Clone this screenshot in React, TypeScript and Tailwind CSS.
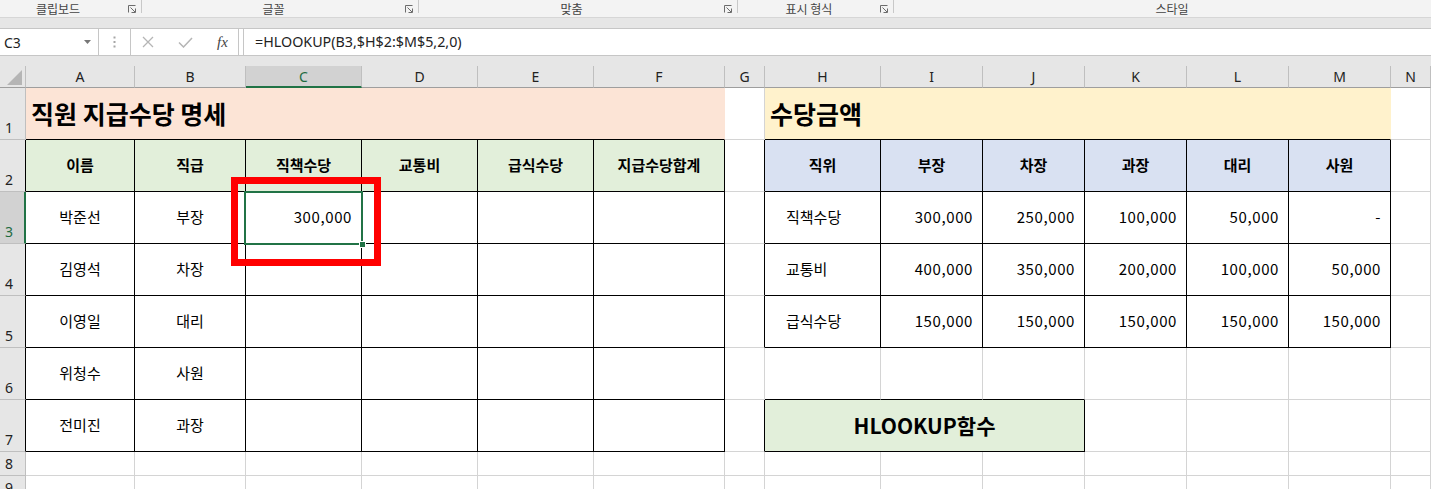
import React from 'react';

type Cell = {
  t?: string;
  a?: 'l' | 'c' | 'r' | 'h';
  bold?: boolean;
  bg?: string;
  r?: boolean;
  b?: boolean;
  span?: 3 | 6;
  kind?: 'title' | 'box';
  rc?: string;
};

const COLS = ['A', 'B', 'C', 'D', 'E', 'F', 'G', 'H', 'I', 'J', 'K', 'L', 'M', 'N'];

const GREEN = 'bg-[#e2efda]';
const BLUE = 'bg-[#d9e1f2]';

const empty = (n: number): Cell[] => Array.from({ length: n }, () => ({}));

const leftHead = ['이름', '직급', '직책수당', '교통비', '급식수당', '지급수당합계'];
const rightHead = ['직위', '부장', '차장', '과장', '대리', '사원'];

const people = [
  ['박준선', '부장', '300,000'],
  ['김영석', '차장', ''],
  ['이영일', '대리', ''],
  ['위청수', '사원', ''],
  ['전미진', '과장', ''],
];

const amounts = [
  ['직책수당', '300,000', '250,000', '100,000', '50,000', '-'],
  ['교통비', '400,000', '350,000', '200,000', '100,000', '50,000'],
  ['급식수당', '150,000', '150,000', '150,000', '150,000', '150,000'],
];

function leftRow(i: number): Cell[] {
  const [name, rank, pay] = people[i];
  return [
    { t: name, a: 'c', r: true, b: true },
    { t: rank, a: 'c', r: true, b: true },
    { t: pay, a: 'r', r: true, b: true },
    { r: true, b: true },
    { r: true, b: true },
    { r: true, b: true },
  ];
}

function rightRow(i: number): Cell[] {
  const row = amounts[i];
  return row.map((t, j) => ({ t, a: j === 0 ? 'h' : 'r', r: true, b: true }) as Cell);
}

const rows: Cell[][] = [
  [
    { t: '직원 지급수당 명세', kind: 'title', span: 6, bg: 'bg-[#fce4d6]', b: true, rc: 'border-r-[#fce4d6]' },
    {},
    { t: '수당금액', kind: 'title', span: 6, bg: 'bg-[#fff2cc]', b: true, rc: 'border-r-[#fff2cc]' },
    {},
  ],
  [
    ...leftHead.map((t) => ({ t, a: 'c', bold: true, bg: GREEN, r: true, b: true }) as Cell),
    { r: true },
    ...rightHead.map((t) => ({ t, a: 'c', bold: true, bg: BLUE, r: true, b: true }) as Cell),
    {},
  ],
  [...leftRow(0), { r: true }, ...rightRow(0), {}],
  [...leftRow(1), { r: true }, ...rightRow(1), {}],
  [...leftRow(2), { r: true }, ...rightRow(2), {}],
  [...leftRow(3), {}, { b: true }, { b: true }, { b: true }, {}, {}, {}, {}],
  [
    ...leftRow(4),
    { r: true },
    { t: 'HLOOKUP함수', kind: 'box', a: 'c', span: 3, bg: GREEN, r: true, b: true },
    {},
    {},
    {},
    {},
  ],
  empty(14),
  empty(14),
];

function Launcher() {
  return (
    <svg width="8" height="8" viewBox="0 0 8 8" className="shrink-0" fill="none" stroke="#6b6b6b" strokeWidth="1">
      <path d="M0.5 7.5V0.5H7.5" />
      <path d="M2.5 2.5L7 7" />
      <path d="M7.5 3.5V7.5H3.5" />
    </svg>
  );
}

function RibbonGroup({ label, w, pad = '' }: { label: string; w: string; pad?: string }) {
  return (
    <>
      <div className={`flex items-start pt-[2px] h-[17px] shrink-0 ${w}`}>
        <span className={`flex-1 text-center leading-[13px] ${pad}`}>{label}</span>
        <div className="mt-[3px] mr-[5px]">
          <Launcher />
        </div>
      </div>
      <div className="w-px h-[13px] bg-[#c8c8c8] shrink-0" />
    </>
  );
}

function GridCell({ c, selected }: { c: Cell; selected?: boolean }) {
  const span = c.span === 6 ? 'col-span-6' : c.span === 3 ? 'col-span-3' : '';
  const rb = c.rc ?? (c.r ? 'border-r-black' : 'border-r-[#d4d4d4]');
  const bb = c.b ? 'border-b-black' : 'border-b-[#d4d4d4]';
  const align =
    c.a === 'r'
      ? 'justify-end pr-[9px] tracking-[0.6px]'
      : c.a === 'c'
        ? 'justify-center'
        : c.a === 'h'
          ? 'justify-start pl-[21px]'
          : 'justify-start pl-[5px]';
  const size =
    c.kind === 'title'
      ? 'text-[25px] font-bold'
      : c.kind === 'box'
        ? 'text-[21px] font-bold'
        : c.bold
          ? 'text-[15px] font-bold'
          : 'text-[15px]';
  return (
    <div
      className={`flex items-center border-r border-b whitespace-nowrap text-black ${span} ${rb} ${bb} ${align} ${size} ${c.bg ?? 'bg-white'} ${selected ? 'relative' : ''}`}
    >
      {c.t}
      {selected ? (
        <>
          <div className="absolute left-[-2px] top-[-1px] w-[119px] h-[54px] border-2 border-[#217346] z-10" />
          <div className="absolute left-[113px] top-[49px] w-[5px] h-[5px] bg-[#217346] border border-white box-content z-10" />
          <div className="absolute left-[-15px] top-[-15px] w-[150px] h-[89px] border-[7px] border-[#ff0000] z-20" />
        </>
      ) : null}
    </div>
  );
}

export default function App() {
  return (
    <div className="w-[1431px] h-[489px] overflow-hidden bg-white font-['Noto_Sans_CJK_KR','Noto_Sans',sans-serif] select-none">
      {/* ribbon group labels */}
      <div className="h-[18px] bg-[#f3f3f3] border-b border-[#d6d6d6] flex text-[12px] text-[#444] overflow-hidden">
        <RibbonGroup label="클립보드" w="w-[141px]" pad="pr-[12px]" />
        <RibbonGroup label="글꼴" w="w-[276px]" />
        <RibbonGroup label="맞춤" w="w-[318px]" />
        <RibbonGroup label="표시 형식" w="w-[155px]" />
        <div className="w-[556px] shrink-0 text-center leading-[13px] pt-[2px]">스타일</div>
      </div>
      <div className="h-[11px] bg-[#e6e6e6] border-b border-[#c6c6c6]" />

      {/* formula bar */}
      <div className="h-[27px] bg-white border-b border-[#c6c6c6] flex items-stretch font-['Noto_Sans',sans-serif] text-[#222]">
        <div className="w-[99px] border-r border-[#c6c6c6] flex items-center justify-between pl-[4px] pr-[7px] text-[14px]">
          <span>C3</span>
          <svg width="7" height="4" viewBox="0 0 7 4">
            <path d="M0 0H7L3.5 4Z" fill="#777" />
          </svg>
        </div>
        <div className="w-[31px] flex items-center justify-center">
          <svg width="3" height="12" viewBox="0 0 3 12" fill="#a6a6a6">
            <rect x="0.5" y="0.5" width="2" height="2" />
            <rect x="0.5" y="5" width="2" height="2" />
            <rect x="0.5" y="9.5" width="2" height="2" />
          </svg>
        </div>
        <div className="w-[109px] border-l border-r border-[#c6c6c6] flex items-center pl-[11px] gap-[24px]">
          <svg width="12" height="12" viewBox="0 0 12 12" stroke="#b5b5b5" strokeWidth="1.3">
            <path d="M1 1L11 11M11 1L1 11" />
          </svg>
          <svg width="15" height="11" viewBox="0 0 15 11" fill="none" stroke="#b5b5b5" strokeWidth="1.5">
            <path d="M1 5.5L5.5 10L14 1" />
          </svg>
          <span className="italic font-['Liberation_Serif',serif] text-[15px] text-[#444] leading-none">fx</span>
        </div>
        <div className="w-[4px]" />
        <div className="flex-1 border-l border-[#c6c6c6] flex items-center pl-[11px] text-[14.3px] text-[#222]">
          =HLOOKUP(B3,$H$2:$M$5,2,0)
        </div>
      </div>
      <div className="h-[10px] bg-[#e6e6e6]" />

      {/* sheet grid */}
      <div className="grid grid-cols-[26px_109px_111px_116px_116px_116px_131px_40px_116px_102px_102px_102px_102px_102px_1fr] grid-rows-[22px_repeat(7,52px)_24px_24px]">
        <div className="bg-[#e6e6e6] border-r border-b border-r-[#bfbfbf] border-b-[#9e9e9e] flex items-end justify-end pr-[3px] pb-[2px]">
          <svg width="15" height="15" viewBox="0 0 15 15">
            <path d="M15 0V15H0Z" fill="#b5b5b5" />
          </svg>
        </div>
        {COLS.map((l) =>
          l === 'C' ? (
            <div
              key={l}
              className="bg-[#d2d2d2] border-r border-b-2 border-r-[#bfbfbf] border-b-[#217346] flex items-center justify-center font-['Noto_Sans',sans-serif] text-[14px] text-[#1e6b41]"
            >
              {l}
            </div>
          ) : (
            <div
              key={l}
              className="bg-[#e6e6e6] border-r border-b border-r-[#bfbfbf] border-b-[#9e9e9e] flex items-center justify-center font-['Noto_Sans',sans-serif] text-[14px] text-[#222]"
            >
              {l}
            </div>
          ),
        )}

        {rows.map((row, ri) => (
          <React.Fragment key={ri}>
            {ri === 2 ? (
              <div className="bg-[#d2d2d2] border-r-2 border-b border-r-[#217346] border-b-[#bfbfbf] flex items-end pl-[5px] pb-[4px] font-['Noto_Sans',sans-serif] text-[14px] leading-none text-[#1e6b41]">
                {ri + 1}
              </div>
            ) : (
              <div
                className={`bg-[#e6e6e6] border-r border-b border-b-[#bfbfbf] flex items-end pl-[5px] pb-[4px] font-['Noto_Sans',sans-serif] text-[14px] leading-none text-[#222] ${ri >= 1 && ri <= 6 ? 'border-r-black' : 'border-r-[#bfbfbf]'}`}
              >
                {ri + 1}
              </div>
            )}
            {row.map((c, ci) => (
              <GridCell key={ci} c={c} selected={ri === 2 && ci === 2} />
            ))}
          </React.Fragment>
        ))}
      </div>
    </div>
  );
}
